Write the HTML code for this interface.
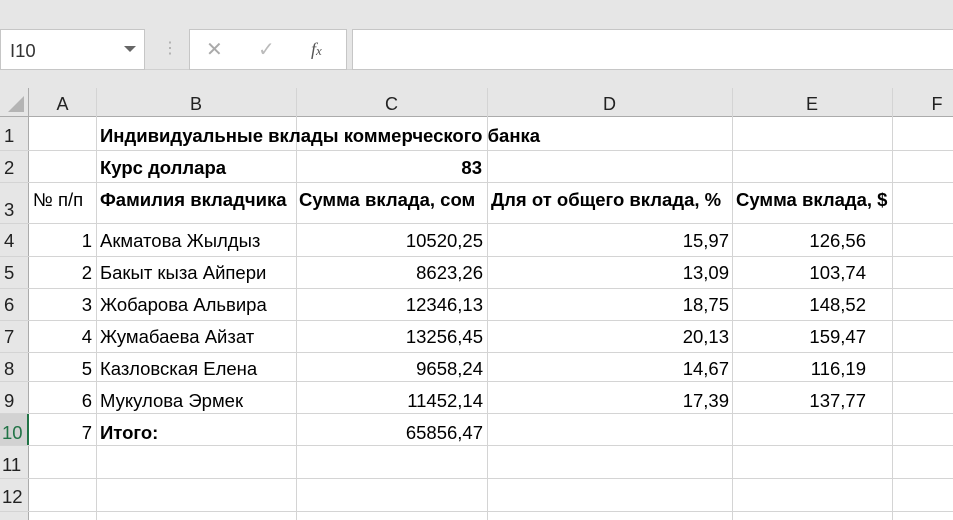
<!DOCTYPE html>
<html><head><meta charset="utf-8"><style>
body{margin:0;width:953px;height:520px;overflow:hidden;background:#fff;font-family:"Liberation Sans",sans-serif;position:relative}
.abs{position:absolute}
.top{left:0;top:0;width:953px;height:117px;background:#e6e6e6}
.box{background:#fff;border:1px solid #c6c6c6;box-sizing:border-box}
.vl{position:absolute;width:1px;background:#d4d4d4}
.hl{position:absolute;height:1px;background:#d4d4d4;left:0;width:953px}
.t{position:absolute;font-size:18.5px;color:#000;white-space:nowrap;line-height:20px}
.b{font-weight:bold}
.h{position:absolute;font-size:18px;color:#222;text-align:center;line-height:20px}
</style></head><body>
<div class="abs top"></div>
<div class="abs" style="left:0;top:69px;width:953px;height:1px;background:#d0d0d0"></div>
<div class="abs box" style="left:0;top:29px;width:145px;height:41px"></div>
<div class="t" style="left:10px;top:41px;color:#333">I10</div>
<div class="abs" style="left:124px;top:46px;width:0;height:0;border-left:6px solid transparent;border-right:6px solid transparent;border-top:6px solid #666"></div>
<div class="t" style="left:162px;top:39px;color:#aaa;font-size:16px">⋮</div>
<div class="abs box" style="left:189px;top:29px;width:158px;height:41px"></div>
<div class="t" style="left:206px;top:40px;color:#aaa;font-size:20px">✕</div>
<div class="t" style="left:258px;top:40px;color:#bbb;font-size:20px">✓</div>
<div class="t" style="left:311px;top:39px;color:#555;font-family:'Liberation Serif',serif;font-style:italic;font-size:18px">f<span style="font-size:13px">x</span></div>
<div class="abs box" style="left:352px;top:29px;width:610px;height:41px"></div>
<div class="abs" style="left:8px;top:96px;width:0;height:0;border-left:16px solid transparent;border-bottom:16px solid #b4b4b4"></div>
<div class="abs" style="left:0;top:117px;width:29px;height:403px;background:#e6e6e6"></div>
<div class="abs" style="left:0;top:116px;width:953px;height:1px;background:#ababab"></div>
<div class="abs" style="left:28px;top:88px;width:1px;height:432px;background:#ababab"></div>
<div class="abs" style="left:0;top:413px;width:29px;height:32px;background:#d2d2d2"></div>
<div class="abs" style="left:27px;top:413px;width:2px;height:32px;background:#217346"></div>
<div class="vl" style="left:96px;top:88px;height:432px"></div>
<div class="vl" style="left:296px;top:88px;height:432px"></div>
<div class="vl" style="left:487px;top:88px;height:432px"></div>
<div class="vl" style="left:732px;top:88px;height:432px"></div>
<div class="vl" style="left:892px;top:88px;height:432px"></div>
<div class="hl" style="top:150px"></div><div class="hl" style="top:182px"></div><div class="hl" style="top:223px"></div>
<div class="hl" style="top:256px"></div><div class="hl" style="top:288px"></div><div class="hl" style="top:320px"></div>
<div class="hl" style="top:352px"></div><div class="hl" style="top:381px"></div><div class="hl" style="top:413px"></div>
<div class="hl" style="top:445px"></div><div class="hl" style="top:478px"></div><div class="hl" style="top:511px"></div>
<div class="h" style="left:29px;width:67px;top:94px">A</div>
<div class="h" style="left:96px;width:200px;top:94px">B</div>
<div class="h" style="left:296px;width:191px;top:94px">C</div>
<div class="h" style="left:487px;width:245px;top:94px">D</div>
<div class="h" style="left:732px;width:160px;top:94px">E</div>
<div class="h" style="left:892px;width:90px;top:94px">F</div>
<div class="t" style="left:4px;top:126px;color:#222">1</div>
<div class="t" style="left:4px;top:158px;color:#222">2</div>
<div class="t" style="left:4px;top:200px;color:#222">3</div>
<div class="t" style="left:4px;top:231px;color:#222">4</div>
<div class="t" style="left:4px;top:263px;color:#222">5</div>
<div class="t" style="left:4px;top:295px;color:#222">6</div>
<div class="t" style="left:4px;top:327px;color:#222">7</div>
<div class="t" style="left:4px;top:359px;color:#222">8</div>
<div class="t" style="left:4px;top:391px;color:#222">9</div>
<div class="t" style="left:2px;top:423px;color:#217346">10</div>
<div class="t" style="left:2px;top:455px;color:#222">11</div>
<div class="t" style="left:2px;top:487px;color:#222">12</div>
<div class="t b" style="left:100px;top:126px">Индивидуальные вклады коммерческого банка</div>
<div class="t b" style="left:100px;top:158px">Курс доллара</div>
<div class="t b" style="left:296px;width:186px;text-align:right;top:158px">83</div>
<div class="t" style="left:33px;top:190px">№ п/п</div>
<div class="t b" style="left:100px;top:190px">Фамилия вкладчика</div>
<div class="t b" style="left:299px;top:190px">Сумма вклада, сом</div>
<div class="t b" style="left:491px;top:190px">Для от общего вклада, %</div>
<div class="t b" style="left:736px;top:190px">Сумма вклада, $</div>
<div id="rows"></div>
<script>
var d=[["1","Акматова Жылдыз","10520,25","15,97","126,56"],["2","Бакыт кыза Айпери","8623,26","13,09","103,74"],["3","Жобарова Альвира","12346,13","18,75","148,52"],["4","Жумабаева Айзат","13256,45","20,13","159,47"],["5","Казловская Елена","9658,24","14,67","116,19"],["6","Мукулова Эрмек","11452,14","17,39","137,77"],["7","Итого:","65856,47","",""]];
var tops=[231,263,295,327,359,391,423],h="";
d.forEach(function(r,i){var t=tops[i];
h+='<div class="t" style="left:29px;width:63px;text-align:right;top:'+t+'px">'+r[0]+'</div>';
h+='<div class="t'+(i==6?' b':'')+'" style="left:100px;top:'+t+'px">'+r[1]+'</div>';
h+='<div class="t" style="left:296px;width:187px;text-align:right;top:'+t+'px">'+r[2]+'</div>';
h+='<div class="t" style="left:487px;width:242px;text-align:right;top:'+t+'px">'+r[3]+'</div>';
h+='<div class="t" style="left:732px;width:134px;text-align:right;top:'+t+'px">'+r[4]+'</div>';});
document.getElementById('rows').innerHTML=h;
</script>
</body></html>
